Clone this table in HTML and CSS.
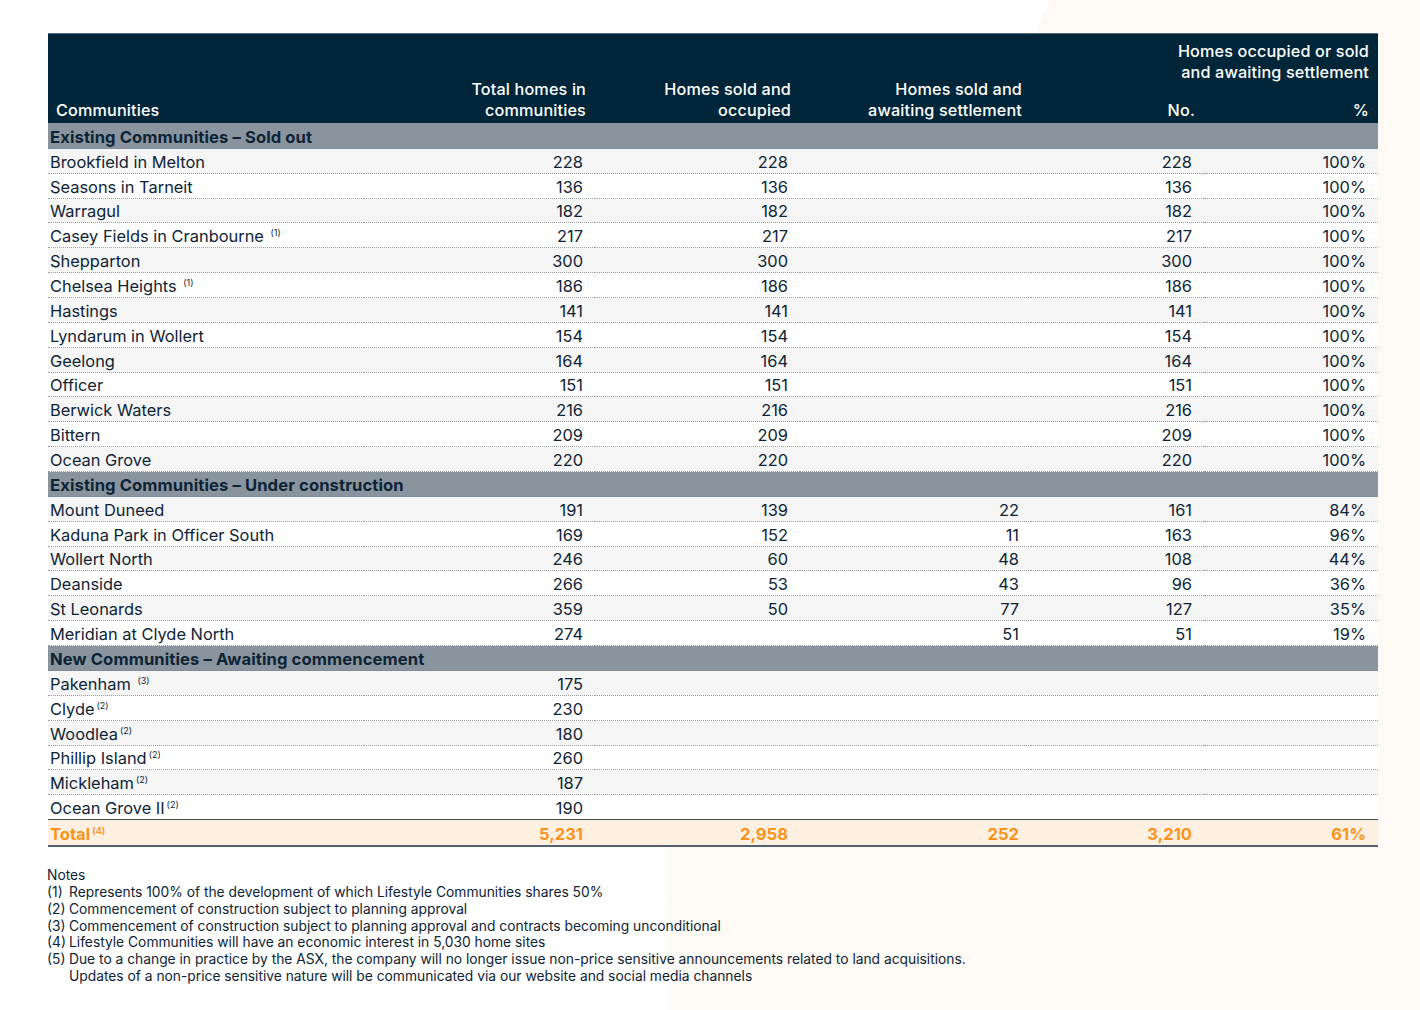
FILE: index.html
```html
<!DOCTYPE html>
<html lang="en">
<head>
<meta charset="utf-8">
<title>Communities</title>
<link rel="stylesheet" href="styles.css">
</head>
<body>
<div class="bg-shape"></div>
<main class="page">
<table class="homes">
  <colgroup>
    <col class="c1"><col class="c2"><col class="c3"><col class="c4"><col class="c5"><col class="c6">
  </colgroup>
  <thead>
    <tr class="h1">
      <th rowspan="2" class="left">Communities</th>
      <th rowspan="2">Total homes in<br>communities</th>
      <th rowspan="2">Homes sold and<br>occupied</th>
      <th rowspan="2">Homes sold and<br>awaiting settlement</th>
      <th colspan="2" class="group">Homes occupied or sold<br>and awaiting settlement</th>
    </tr>
    <tr class="h2">
      <th>No.</th>
      <th>%</th>
    </tr>
  </thead>
  <tbody>
    <tr class="section first"><td colspan="6">Existing Communities – Sold out</td></tr>
    <tr><td>Brookfield in Melton</td><td>228</td><td>228</td><td></td><td>228</td><td>100%</td></tr>
    <tr><td>Seasons in Tarneit</td><td>136</td><td>136</td><td></td><td>136</td><td>100%</td></tr>
    <tr><td>Warragul</td><td>182</td><td>182</td><td></td><td>182</td><td>100%</td></tr>
    <tr><td>Casey Fields in Cranbourne <sup class="fn">(1)</sup></td><td>217</td><td>217</td><td></td><td>217</td><td>100%</td></tr>
    <tr><td>Shepparton</td><td>300</td><td>300</td><td></td><td>300</td><td>100%</td></tr>
    <tr><td>Chelsea Heights <sup class="fn">(1)</sup></td><td>186</td><td>186</td><td></td><td>186</td><td>100%</td></tr>
    <tr><td>Hastings</td><td>141</td><td>141</td><td></td><td>141</td><td>100%</td></tr>
    <tr><td>Lyndarum in Wollert</td><td>154</td><td>154</td><td></td><td>154</td><td>100%</td></tr>
    <tr><td>Geelong</td><td>164</td><td>164</td><td></td><td>164</td><td>100%</td></tr>
    <tr><td>Officer</td><td>151</td><td>151</td><td></td><td>151</td><td>100%</td></tr>
    <tr><td>Berwick Waters</td><td>216</td><td>216</td><td></td><td>216</td><td>100%</td></tr>
    <tr><td>Bittern</td><td>209</td><td>209</td><td></td><td>209</td><td>100%</td></tr>
    <tr><td>Ocean Grove</td><td>220</td><td>220</td><td></td><td>220</td><td>100%</td></tr>
  </tbody>
  <tbody>
    <tr class="section"><td colspan="6">Existing Communities – Under construction</td></tr>
    <tr><td>Mount Duneed</td><td>191</td><td>139</td><td>22</td><td>161</td><td>84%</td></tr>
    <tr><td>Kaduna Park in Officer South</td><td>169</td><td>152</td><td>11</td><td>163</td><td>96%</td></tr>
    <tr><td>Wollert North</td><td>246</td><td>60</td><td>48</td><td>108</td><td>44%</td></tr>
    <tr><td>Deanside</td><td>266</td><td>53</td><td>43</td><td>96</td><td>36%</td></tr>
    <tr><td>St Leonards</td><td>359</td><td>50</td><td>77</td><td>127</td><td>35%</td></tr>
    <tr><td>Meridian at Clyde North</td><td>274</td><td></td><td>51</td><td>51</td><td>19%</td></tr>
  </tbody>
  <tbody>
    <tr class="section"><td colspan="6">New Communities – Awaiting commencement</td></tr>
    <tr><td>Pakenham <sup class="fn">(3)</sup></td><td>175</td><td></td><td></td><td></td><td></td></tr>
    <tr><td>Clyde<sup class="fn">(2)</sup></td><td>230</td><td></td><td></td><td></td><td></td></tr>
    <tr><td>Woodlea<sup class="fn">(2)</sup></td><td>180</td><td></td><td></td><td></td><td></td></tr>
    <tr><td>Phillip Island<sup class="fn">(2)</sup></td><td>260</td><td></td><td></td><td></td><td></td></tr>
    <tr><td>Mickleham<sup class="fn">(2)</sup></td><td>187</td><td></td><td></td><td></td><td></td></tr>
    <tr><td>Ocean Grove II<sup class="fn">(2)</sup></td><td>190</td><td></td><td></td><td></td><td></td></tr>
  </tbody>
  <tfoot>
    <tr class="total"><td>Total<sup class="fn">(4)</sup></td><td>5,231</td><td>2,958</td><td>252</td><td>3,210</td><td>61%</td></tr>
  </tfoot>
</table>

<section class="notes">
  <p class="notes-title">Notes</p>
  <ol class="note-list">
    <li><span class="num">(1)</span><span>Represents 100% of the development of which Lifestyle Communities shares 50%</span></li>
    <li><span class="num">(2)</span><span>Commencement of construction subject to planning approval</span></li>
    <li><span class="num">(3)</span><span>Commencement of construction subject to planning approval and contracts becoming unconditional</span></li>
    <li><span class="num">(4)</span><span>Lifestyle Communities will have an economic interest in 5,030 home sites</span></li>
    <li><span class="num">(5)</span><span>Due to a change in practice by the ASX, the company will no longer issue non-price sensitive announcements related to land acquisitions.<br>Updates of a non-price sensitive nature will be communicated via our website and social media channels</span></li>
  </ol>
</section>
</main>
</body>
</html>
```

FILE: styles.css
```css
html, body {
  margin: 0;
  padding: 0;
  background: #ffffff;
}

body {
  position: relative;
  width: 1420px;
  height: 1010px;
  overflow: hidden;
  font-family: "Inter", "Noto Sans", sans-serif;
  color: #0d2436;
}

.bg-shape {
  position: absolute;
  inset: 0;
  background: #fdf9f4;
  clip-path: polygon(1050px 0, 1420px 0, 1420px 1010px, 669px 1010px, 667px 850px);
  z-index: 0;
}

.page {
  position: relative;
  z-index: 1;
  padding: 33px 42px 0 48px;
}

.homes {
  width: 1330px;
  border-collapse: separate;
  border-spacing: 0;
  table-layout: fixed;
  font-size: 16.4px;
}

.c1 { width: 316px; }
.c2 { width: 231px; }
.c3 { width: 205px; }
.c4 { width: 231px; }
.c5 { width: 173px; }
.c6 { width: 174px; }

thead th {
  background: #01263a;
  color: #ffffff;
  font-weight: 500;
  font-size: 16.2px;
  line-height: 20.5px;
  text-align: right;
  vertical-align: bottom;
  padding: 0 9px 3px 0;
  letter-spacing: 0.15px;
}

thead .h1 th {
  border-top: 1px solid #5a6c79;
}

thead .h1 { height: 55px; }
thead .h2 { height: 35px; }

thead th.left {
  text-align: left;
  padding-left: 8px;
}

thead th.group {
  vertical-align: top;
  padding-top: 7px;
}

tbody td,
tfoot td {
  height: 23.86px;
  padding: 0 12px 0 0;
  text-align: right;
  vertical-align: bottom;
  line-height: 21px;
  border-bottom: 1px dotted #9a9fa4;
  background: #ffffff;
}

tbody td:first-child,
tfoot td:first-child {
  text-align: left;
  padding-left: 2px;
  white-space: nowrap;
}

tbody tr:nth-child(even) td {
  background: #f5f5f5;
}

tr.section td {
  background: #8a949e;
  font-weight: 700;
  font-size: 16.6px;
  color: #0d2436;
  padding-left: 2px;
  text-align: left;
  letter-spacing: 0.1px;
  border-bottom: 1px dotted #7b858f;
}

tr.section.first td {
  height: 24.88px;
}

.fn {
  font-size: 9px;
  vertical-align: 6px;
  line-height: 0;
  margin-left: 2px;
  letter-spacing: 0;
}

tr.total td {
  background: #fef0e0;
  color: #f7941d;
  font-weight: 700;
  font-size: 16.6px;
  line-height: 21px;
  border-top: 1px solid #3c4a56;
  border-bottom: 2px solid #52606b;
  height: 25px;
}

tbody:last-of-type tr:last-child td {
  border-bottom: none;
}

.notes {
  margin-top: 20px;
  margin-left: -1px;
  font-size: 13.8px;
  line-height: 16.85px;
  color: #0d2436;
}

.notes-title {
  margin: 0;
}

.note-list {
  list-style: none;
  margin: 0;
  padding: 0;
}

.note-list li {
  display: flex;
}

.note-list .num {
  width: 22px;
  flex: none;
}
```
